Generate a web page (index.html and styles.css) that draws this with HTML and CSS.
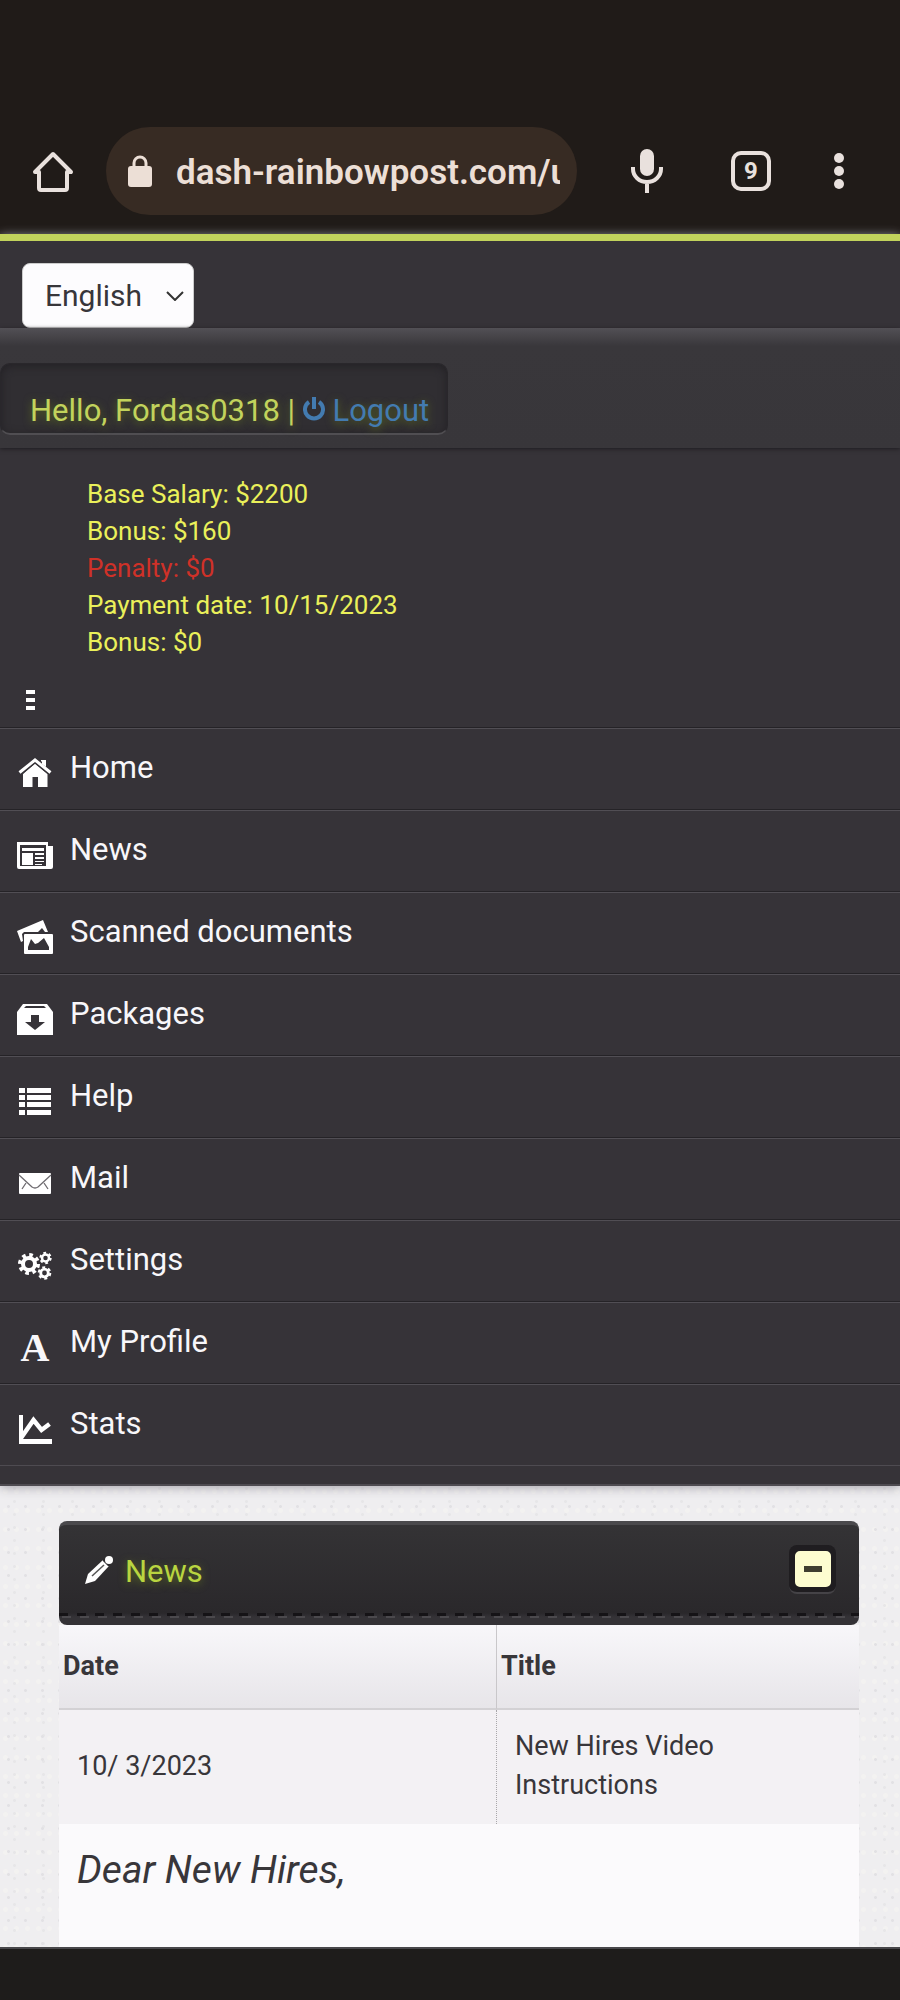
FILE: index.html
```
<!DOCTYPE html>
<html lang="en">
<head>
    <meta charset="utf-8">
    <meta name="viewport" content="width=device-width, initial-scale=1">
    <title>Dashboard</title>
    <link rel="stylesheet" href="styles.css">
</head>
<body>

<header class="browser">
    <button class="browser-btn home-btn" aria-label="Home page">
        <svg width="42" height="42" viewBox="0 0 42 42" fill="none" stroke="#e9e1dd" stroke-width="4" stroke-linejoin="round" stroke-linecap="round"><path d="M3 22L21 4l18 18h-4v16q0 2-2 2H9q-2 0-2-2V22z"/></svg>
    </button>
    <a href="#" class="address">
        <svg width="24" height="32" viewBox="0 0 24 32"><path d="M6 12V8a6 6 0 0 1 12 0v4" fill="none" stroke="#ecdfd6" stroke-width="3"/><rect y="11" width="24" height="21" rx="3" fill="#ecdfd6"/></svg>
        <span class="url">dash-rainbowpost.com/u</span>
    </a>
    <div class="browser-tools">
        <button class="browser-btn" aria-label="Voice search">
            <svg width="32" height="46" viewBox="0 0 32 46"><rect x="9" y="1" width="14" height="27" rx="7" fill="#e9e1dd"/><path d="M2 19v2a14 13 0 0 0 28 0v-2M16 34v11" fill="none" stroke="#e9e1dd" stroke-width="4"/></svg>
        </button>
        <button class="browser-btn" aria-label="Tabs"><span class="tab-count">9</span></button>
        <button class="browser-btn more-btn" aria-label="More">
            <svg width="10" height="38" viewBox="0 0 10 38" fill="#e9e1dd"><circle cx="5" cy="6" r="5"/><circle cx="5" cy="19" r="5"/><circle cx="5" cy="32" r="5"/></svg>
        </button>
    </div>
</header>

<div class="sidebar">
    <div class="lang-bar">
        <select class="lang" aria-label="Language">
            <option>English</option>
            <option>Spanish</option>
        </select>
    </div>

    <div class="user-bar">
        <div class="user-box">
            Hello, Fordas0318 |
            <a href="#"><svg width="22" height="24" viewBox="0 0 22 24" fill="none" stroke="#437bb0" stroke-width="4"><path d="M6 5a9 9 0 1 0 10 0M11 0v12"/></svg> Logout</a>
        </div>
    </div>

    <ul class="salary">
        <li>Base Salary: $2200</li>
        <li>Bonus: $160</li>
        <li class="penalty">Penalty: $0</li>
        <li>Payment date: 10/15/2023</li>
        <li>Bonus: $0</li>
    </ul>

    <button class="menu-toggle" aria-label="Menu">
        <span></span><span></span><span></span>
    </button>

    <nav class="menu">
        <a href="#">
            <svg class="icon" viewBox="0 0 36 36"><path d="M24 6h5v8h-5zM6 20L18 9.500 30.500 20v13H21V23h-5.500v10H6z"/><path d="M2 19L18 6l16 13" fill="none" stroke="#363338" stroke-width="6"/><path d="M2.500 18.500L18 6l15.500 12.500" fill="none" stroke="#fff" stroke-width="3"/><path d="M25 6h4v7l-4-3z"/></svg>
            Home
        </a>
        <a href="#">
            <svg class="icon" viewBox="0 0 36 36"><path d="M0 6h31v4h5v21q0 2-2 2H2q-2 0-2-2z"/><path d="M3 9h26v21H3z" fill="#363338"/><path d="M5 12h22v3H5zM5 17h11v12H5zM18 17h9v2h-9zM18 21h9v2h-9zM18 25h9v1h-9zM18 28h7v1h-7z"/></svg>
            News
        </a>
        <a href="#">
            <svg class="icon" viewBox="0 0 36 36"><path d="M0 13L26 2l5 12h-3l-3-4-4 4H7l-2 2 1 7-2 1z"/><rect x="7" y="16" width="29" height="20" rx="1"/><path d="M11 32V29l3-8 4 5 3-1 6-5 5 9v3z" fill="#363338"/></svg>
            Scanned documents
        </a>
        <a href="#">
            <svg class="icon" viewBox="0 0 36 36"><path d="M6 4h24l6 8v23H0V12z"/><path d="M9 6h18l2 2H7zM14 15h8v7h6l-10 8-10-8h6z" fill="#363338"/></svg>
            Packages
        </a>
        <a href="#">
            <svg class="icon" viewBox="0 0 36 36"><path d="M2 6h6v5H2zM2 13h6v5H2zM2 20h6v5H2zM2 28h6v5H2zM10 6h24v5H10zM10 13h24v5H10zM10 20h24v5H10zM10 28h24v5H10z"/></svg>
            Help
        </a>
        <a href="#">
            <svg class="icon" viewBox="0 0 36 36"><rect x="2" y="9" width="32" height="21" rx="1"/><path d="M2 11l13 12q3 2 6 0L34 11M9 19l-4 6M27 19l4 6" fill="none" stroke="#6d6a6f" stroke-width="1.300"/></svg>
            Mail
        </a>
        <a href="#">
            <svg class="icon" viewBox="0 0 36 36"><g fill="none" stroke="#fff"><circle cx="12" cy="18" r="6" stroke-width="4"/><circle cx="12" cy="18" r="9" stroke-width="4" stroke-dasharray="3.530"/><circle cx="28.500" cy="12" r="3.500" stroke-width="2.500"/><circle cx="28.500" cy="12" r="5.200" stroke-width="2" stroke-dasharray="2.720"/><circle cx="27.500" cy="27" r="3.800" stroke-width="2.800"/><circle cx="27.500" cy="27" r="5.800" stroke-width="2" stroke-dasharray="3.040"/></g></svg>
            Settings
        </a>
        <a href="#">
            <span class="icon letter" aria-hidden="true">A</span>
            My Profile
        </a>
        <a href="#">
            <svg class="icon" viewBox="0 0 36 36"><path d="M2 5h4v24h29v5H2z"/><path d="M4 28L16.500 10l8 10 8-6" fill="none" stroke="#fff" stroke-width="4.500"/></svg>
            Stats
        </a>
    </nav>
</div>

<main class="content">
    <div class="panel-head">
        <svg width="28" height="28" viewBox="0 0 28 28"><path d="M0 28l3-10L18 4l6 6L10 25z" fill="#fff"/><path d="M7 20L19 9" stroke="#555" stroke-width="1.500"/><path d="M18 4l6 6" stroke="#2f2d31" stroke-width="1.500"/><circle cx="24" cy="4" r="4" fill="#fff"/></svg>
        <h2>News</h2>
        <button class="collapse" aria-label="Collapse"><span></span></button>
    </div>
    <table class="news">
        <thead>
            <tr>
                <th>Date</th>
                <th>Title</th>
            </tr>
        </thead>
        <tbody>
            <tr>
                <td>10/ 3/2023</td>
                <td>New Hires Video Instructions</td>
            </tr>
        </tbody>
    </table>
    <div class="article"><em>Dear New Hires,</em></div>
</main>

<footer class="navbar"></footer>

</body>
</html>
```
FILE: styles.css
```
* {
    box-sizing: border-box;
}

body {
    display: flex;
    flex-direction: column;
    min-height: 100vh;
    margin: 0;
    font-family: Roboto, sans-serif;
    font-size: 30px;
    color: #38363a;
    background-color: #efeef0;
    background-image:
        radial-gradient(circle, #e2e1e4 1px, transparent 2px),
        radial-gradient(circle, #e7e6e8 1px, transparent 2px),
        radial-gradient(circle, #f3f2f1 2px, transparent 3px);
    background-size: 17px 23px, 29px 13px, 11px 19px;
}

button {
    padding: 0;
    border: 0;
    background: none;
    font-family: inherit;
}

/* Browser bar */
.browser {
    display: flex;
    align-items: center;
    padding: 127px 25px 19px 0;
    background-color: #201b18;
}

.browser-btn {
    display: flex;
    align-items: center;
    justify-content: center;
    width: 104px;
    height: 88px;
}

.home-btn {
    width: 106px;
}

.address {
    display: flex;
    flex: 1;
    align-items: center;
    gap: 24px;
    min-width: 0;
    height: 88px;
    padding: 0 17px 0 22px;
    border-radius: 44px;
    background-color: #372b23;
    text-decoration: none;
}

.address svg {
    flex: none;
}

.url {
    flex: 1;
    overflow: hidden;
    padding-top: 2px;
    white-space: nowrap;
    font-size: 35px;
    font-weight: 600;
    color: #ecdfd6;
}

.browser-tools {
    display: flex;
    margin-left: 18px;
}

.more-btn {
    width: 72px;
}

.tab-count {
    width: 40px;
    height: 40px;
    border: 4px solid #e9e1dd;
    border-radius: 10px;
    font-size: 24px;
    font-weight: bold;
    line-height: 32px;
    color: #e9e1dd;
}

/* Sidebar */
.sidebar {
    border-top: 7px solid #c2d35c;
    background-color: #363338;
    box-shadow: 0 2px 10px #aaa8b0;
}

.lang-bar {
    padding: 22px 22px 0;
}

.lang {
    display: block;
    width: 172px;
    height: 65px;
    padding: 0 22px;
    border: 1px solid #ccc;
    border-radius: 8px;
    appearance: none;
    background: #fdfcfe url("data:image/svg+xml,%3Csvg xmlns='http://www.w3.org/2000/svg' width='18' height='10'%3E%3Cpath d='M1 1l8 8 8-8' fill='none' stroke='%23333' stroke-width='2'/%3E%3C/svg%3E") no-repeat right 9px center;
    font-family: inherit;
    font-size: 30px;
    color: #38363a;
}

.user-bar {
    padding: 35px 0 13px;
    background: linear-gradient(#525055, #39373b 18px, #38363a);
    box-shadow: 0 1px 4px #1e1c20;
}

.user-box {
    width: fit-content;
    padding: 29px 18px 4px 29px;
    border: 1px solid #29272b;
    border-bottom: 2px solid #504e52;
    border-radius: 10px;
    background-color: #302e32;
    box-shadow: inset 0 2px 8px #232125;
    font-size: 31px;
    line-height: 36px;
    color: #c2d35c;
    text-shadow: 0 2px 8px #5c6a20;
}

.user-box a {
    color: #437bb0;
    text-decoration: none;
}

.salary {
    margin: 0;
    padding: 28px 87px 0;
    list-style: none;
    font-size: 26px;
    line-height: 37px;
    color: #eaf05a;
}

.penalty {
    color: #cf3128;
}

.menu-toggle {
    display: flex;
    flex-direction: column;
    gap: 4px;
    margin: 29px 26px 17px;
}

.menu-toggle span {
    width: 9px;
    height: 4px;
    background-color: #fff;
}

.menu {
    padding-bottom: 19px;
    border-bottom: 2px solid #4e4b51;
    background: linear-gradient(#4e4b51, #4e4b51) 0 738px / 100% 1px no-repeat;
}

.menu a {
    display: flex;
    gap: 17px;
    height: 82px;
    padding: 22px 17px 0;
    border-top: 1px solid #252327;
    box-shadow: inset 0 1px #514e54;
    font-size: 31px;
    line-height: 36px;
    color: #f8f7fa;
    text-decoration: none;
}

.icon {
    flex: none;
    width: 36px;
    height: 36px;
    margin-top: 4px;
    fill: #fff;
}

.menu .letter {
    font-family: "Liberation Serif", serif;
    font-size: 40px;
    font-weight: bold;
    line-height: 40px;
    text-align: center;
}

/* News panel */
.content {
    flex: 1;
    display: flex;
    flex-direction: column;
    padding: 35px 41px 0 59px;
}

.panel-head {
    display: flex;
    align-items: center;
    height: 104px;
    padding: 0 23px 11px 26px;
    border-top: 4px solid #4a494c;
    border-radius: 8px;
    background:
        repeating-linear-gradient(90deg, #151316 0 9px, transparent 9px 18px) 0 88px / 100% 3px no-repeat,
        repeating-linear-gradient(90deg, #4b494d 0 9px, transparent 9px 18px) 3px 91px / 100% 2px no-repeat,
        linear-gradient(#343335, #2a282b 88px, #343236 92px);
}

.panel-head h2 {
    flex: 1;
    margin: 3px 0 0 12px;
    font-size: 31px;
    font-weight: normal;
    color: #b9d540;
    text-shadow: 0 2px 8px #5c6a20;
}

.collapse {
    display: flex;
    align-items: center;
    justify-content: center;
    width: 47px;
    height: 49px;
    border-bottom: 2px solid #454347;
    border-radius: 8px;
    background-color: #1f1d20;
}

.collapse span {
    width: 36px;
    height: 36px;
    border: 15px solid #fdfdd0;
    border-width: 15px 9px;
    border-radius: 5px;
    background-color: #3f3e30;
}

.news {
    width: 100%;
    table-layout: fixed;
    border-collapse: separate;
    border-spacing: 0;
    font-size: 27px;
    line-height: 39px;
    text-align: left;
}

.news th {
    height: 85px;
    padding: 0 4px;
    border-bottom: 2px solid #d3d1d4;
    background: linear-gradient(#f8f7fa, #e7e5e9);
}

.news th:first-child {
    width: 438px;
    border-right: 1px solid #c9c7ca;
}

.news td {
    height: 114px;
    padding: 16px 120px 18px 18px;
    background-color: #f3f1f4;
}

.news td:first-child {
    border-right: 1px dotted #a9a7aa;
}

.article {
    flex: 1;
    padding: 22px 18px;
    background-color: #fbfafc;
    font-size: 39px;
    line-height: 48px;
}

.navbar {
    height: 53px;
    border-top: 2px solid #48474a;
    background-color: #1e1c1b;
}
```
